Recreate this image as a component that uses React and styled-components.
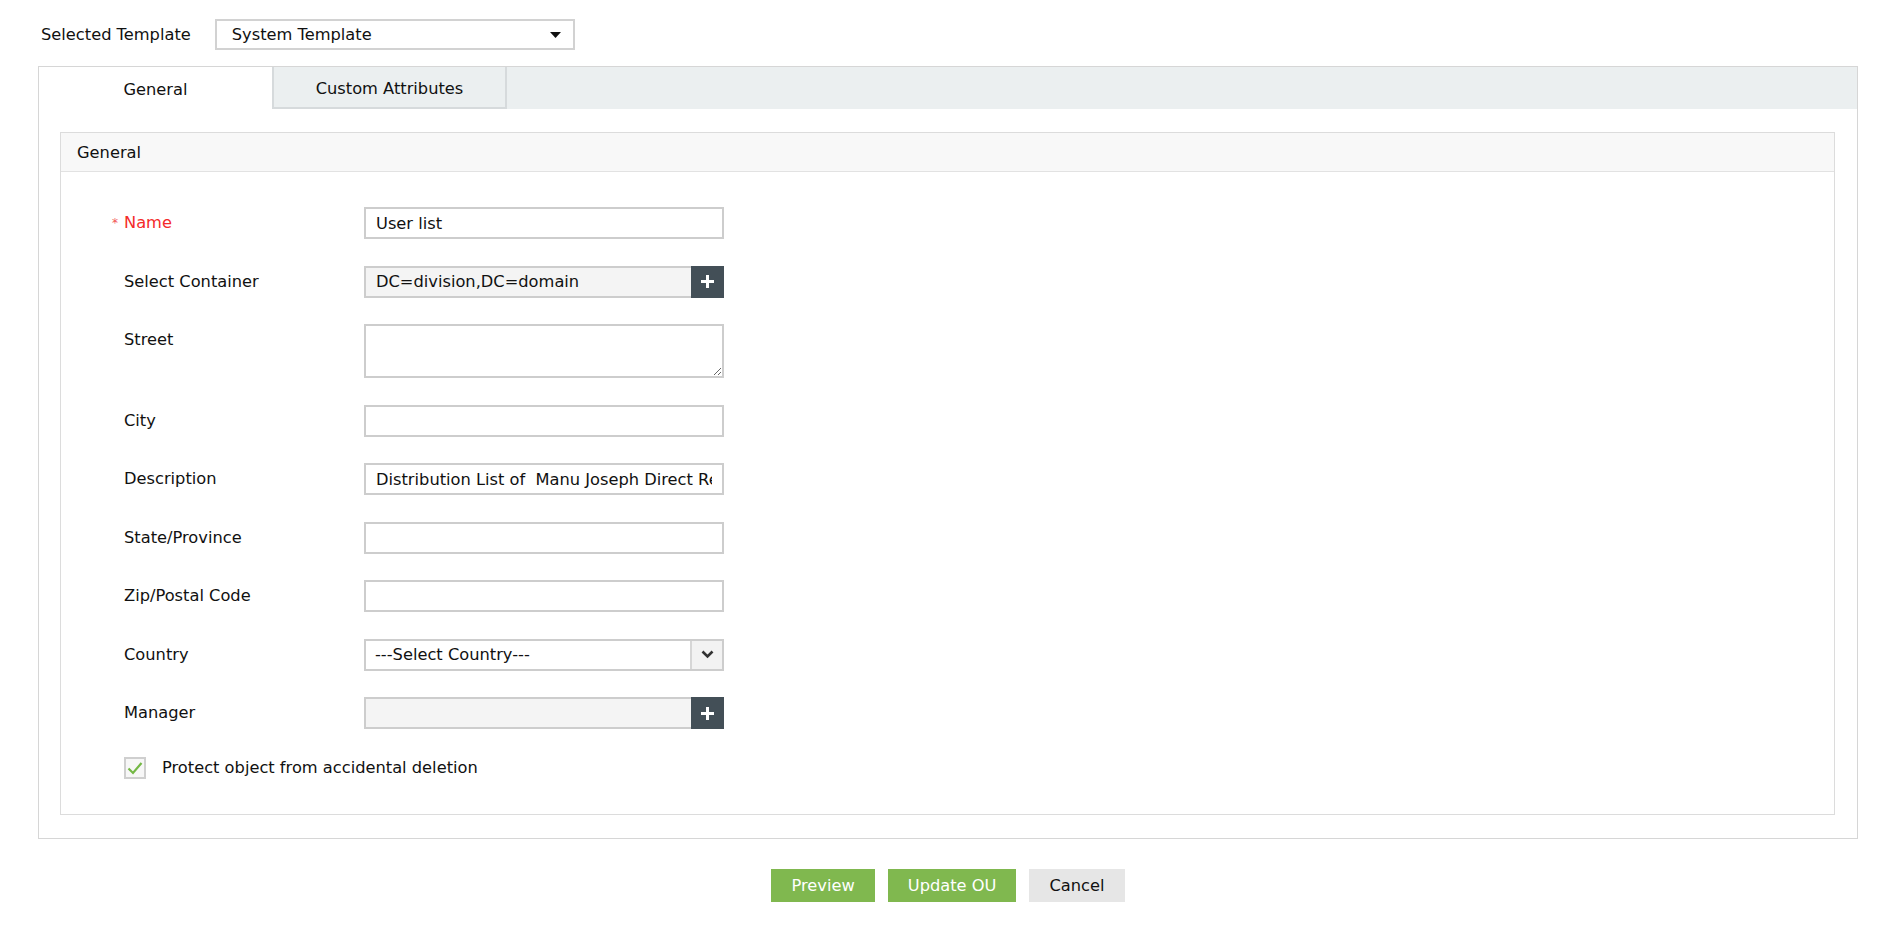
import React from "react";
import styled, { createGlobalStyle } from "styled-components";

const FONT = `"DejaVu Sans", Verdana, sans-serif`;
const SIZE = "16.25px";

const GlobalStyle = createGlobalStyle`
  html, body {
    margin: 0;
    padding: 0;
    background: #ffffff;
  }
  body {
    font-family: ${FONT};
    font-size: ${SIZE};
    color: #111;
  }
  * { box-sizing: border-box; }
`;

const Page = styled.div`
  padding: 19px 36px 40px 38px;
`;

const TemplateBar = styled.div`
  display: flex;
  align-items: center;
  gap: 24px;
  height: 31px;
`;

const TemplateLabel = styled.span`
  margin-left: 3px;
  font-size: ${SIZE};
  color: #111;
`;

const TemplateSelect = styled.div`
  width: 360px;
  height: 31px;
  border: 2px solid #d2d2d2;
  display: flex;
  align-items: center;
  justify-content: space-between;
  padding: 0 12px 0 15px;
  font-size: ${SIZE};
  color: #111;
  background: #fff;
`;

const Card = styled.div`
  margin-top: 16px;
  border: 1px solid #d6d6d6;
  background: #fff;
`;

const TabBar = styled.div`
  display: flex;
  height: 42px;
  background: #ebeff0;
`;

const Tab = styled.div`
  width: ${(p) => (p.$active ? "233px" : "235px")};
  height: 42px;
  display: flex;
  align-items: center;
  justify-content: center;
  padding-top: 2px;
  font-size: ${SIZE};
  color: #111;
  background: ${(p) => (p.$active ? "#ffffff" : "#ebeff0")};
  border: ${(p) => (p.$active ? "none" : "2px solid #d6dadc")};
  border-top: none;
`;

const CardBody = styled.div`
  padding: 23px 22px 23px 21px;
`;

const Panel = styled.div`
  border: 1px solid #dcdcdc;
`;

const PanelHeader = styled.div`
  height: 39px;
  line-height: 39px;
  padding-left: 16px;
  background: #f8f8f8;
  border-bottom: 1px solid #e2e2e2;
  font-size: ${SIZE};
  color: #111;
`;

const Form = styled.div`
  display: flex;
  flex-direction: column;
  gap: 26.5px;
  padding: 35px 0 35px 51px;
`;

const Row = styled.div`
  display: flex;
  align-items: flex-start;
`;

const Label = styled.div`
  width: 252px;
  line-height: 32px;
  font-size: ${SIZE};
  color: ${(p) => (p.$required ? "#f42a2a" : "#111")};
  display: flex;
  align-items: center;
`;

const Asterisk = styled.span`
  width: 12px;
  font-size: 12px;
  color: #f25555;
  line-height: 32px;
`;

const LabelText = styled.span`
  padding-left: ${(p) => (p.$indent ? "12px" : "0")};
`;

const TextInput = styled.input`
  width: ${(p) => (p.$grow ? "auto" : "360px")};
  flex: ${(p) => (p.$grow ? "1" : "none")};
  min-width: 0;
  height: 32px;
  border: 2px solid #cdcdcd;
  border-right: ${(p) => (p.$grow ? "none" : "2px solid #cdcdcd")};
  padding: 0 10px;
  font-family: ${FONT};
  font-size: ${SIZE};
  color: #111;
  background: ${(p) => (p.$readonly ? "#f4f4f4" : "#ffffff")};
  outline: none;
`;

const TextArea = styled.textarea`
  width: 360px;
  height: 54px;
  border: 2px solid #cdcdcd;
  padding: 6px 10px;
  font-family: ${FONT};
  font-size: ${SIZE};
  outline: none;
  display: block;
`;

const FieldGroup = styled.div`
  width: 360px;
  height: 32px;
  display: flex;
`;

const AddButton = styled.button`
  width: 33px;
  height: 32px;
  border: none;
  padding: 0;
  background: #434f57;
  display: flex;
  align-items: center;
  justify-content: center;
  cursor: pointer;
`;

const CountrySelect = styled.div`
  width: 360px;
  height: 32px;
  border: 2px solid #cdcdcd;
  display: flex;
  align-items: stretch;
  background: #fff;
`;

const CountryValue = styled.div`
  flex: 1;
  display: flex;
  align-items: center;
  padding-left: 9px;
  font-size: ${SIZE};
  color: #111;
`;

const CountryArrow = styled.div`
  width: 32px;
  border-left: 2px solid #d6d6d6;
  background: #f2f2f2;
  display: flex;
  align-items: center;
  justify-content: center;
`;

const CheckRow = styled.label`
  display: flex;
  align-items: center;
  gap: 16px;
  padding-left: 12px;
  margin-top: 1px;
  font-size: ${SIZE};
  color: #111;
`;

const CheckBox = styled.span`
  width: 22px;
  height: 22px;
  border: 2px solid #cfcfcf;
  background: #f7f7f7;
  display: flex;
  align-items: center;
  justify-content: center;
`;

const Actions = styled.div`
  display: flex;
  justify-content: center;
  gap: 13px;
  margin-top: 30px;
`;

const ActionButton = styled.button`
  height: 33px;
  padding: 0 20px;
  border: none;
  font-family: ${FONT};
  font-size: ${SIZE};
  background: ${(p) => (p.$primary ? "#80b84f" : "#e6e6e6")};
  color: ${(p) => (p.$primary ? "#ffffff" : "#111")};
  cursor: pointer;
`;

const PlusIcon = () => (
  <svg width="17" height="17" viewBox="0 0 17 17">
    <path d="M8.5 2v13M2 8.5h13" stroke="#fff" strokeWidth="3" strokeLinecap="butt" />
  </svg>
);

const Caret = () => (
  <svg width="11" height="6" viewBox="0 0 11 6">
    <path d="M0 0h11L5.5 6z" fill="#111" />
  </svg>
);

const Chevron = () => (
  <svg width="13" height="9" viewBox="0 0 13 9">
    <path d="M1.5 1.5l5 5 5-5" fill="none" stroke="#333" strokeWidth="2.6" />
  </svg>
);

const Check = () => (
  <svg width="16" height="14" viewBox="0 0 16 14">
    <path d="M1.5 7.5l4.5 4.5L14.5 2" fill="none" stroke="#74b845" strokeWidth="2.2" />
  </svg>
);

function Field({ label, required, children }) {
  return (
    <Row>
      <Label $required={required}>
        {required && <Asterisk>*</Asterisk>}
        <LabelText $indent={!required}>{label}</LabelText>
      </Label>
      {children}
    </Row>
  );
}

export default function App() {
  return (
    <>
      <GlobalStyle />
      <Page>
        <TemplateBar>
          <TemplateLabel>Selected Template</TemplateLabel>
          <TemplateSelect>
            <span>System Template</span>
            <Caret />
          </TemplateSelect>
        </TemplateBar>

        <Card>
          <TabBar>
            <Tab $active>General</Tab>
            <Tab>Custom Attributes</Tab>
          </TabBar>
          <CardBody>
            <Panel>
              <PanelHeader>General</PanelHeader>
              <Form>
                <Field label="Name" required>
                  <TextInput defaultValue="User list" />
                </Field>
                <Field label="Select Container">
                  <FieldGroup>
                    <TextInput $grow $readonly readOnly defaultValue="DC=division,DC=domain" />
                    <AddButton aria-label="Select container">
                      <PlusIcon />
                    </AddButton>
                  </FieldGroup>
                </Field>
                <Field label="Street">
                  <TextArea />
                </Field>
                <Field label="City">
                  <TextInput />
                </Field>
                <Field label="Description">
                  <TextInput defaultValue="Distribution List of  Manu Joseph Direct Reports" />
                </Field>
                <Field label="State/Province">
                  <TextInput />
                </Field>
                <Field label="Zip/Postal Code">
                  <TextInput />
                </Field>
                <Field label="Country">
                  <CountrySelect>
                    <CountryValue>---Select Country---</CountryValue>
                    <CountryArrow>
                      <Chevron />
                    </CountryArrow>
                  </CountrySelect>
                </Field>
                <Field label="Manager">
                  <FieldGroup>
                    <TextInput $grow $readonly readOnly />
                    <AddButton aria-label="Select manager">
                      <PlusIcon />
                    </AddButton>
                  </FieldGroup>
                </Field>
                <CheckRow>
                  <CheckBox>
                    <Check />
                  </CheckBox>
                  <span>Protect object from accidental deletion</span>
                </CheckRow>
              </Form>
            </Panel>
          </CardBody>
        </Card>

        <Actions>
          <ActionButton $primary>Preview</ActionButton>
          <ActionButton $primary>Update OU</ActionButton>
          <ActionButton>Cancel</ActionButton>
        </Actions>
      </Page>
    </>
  );
}
